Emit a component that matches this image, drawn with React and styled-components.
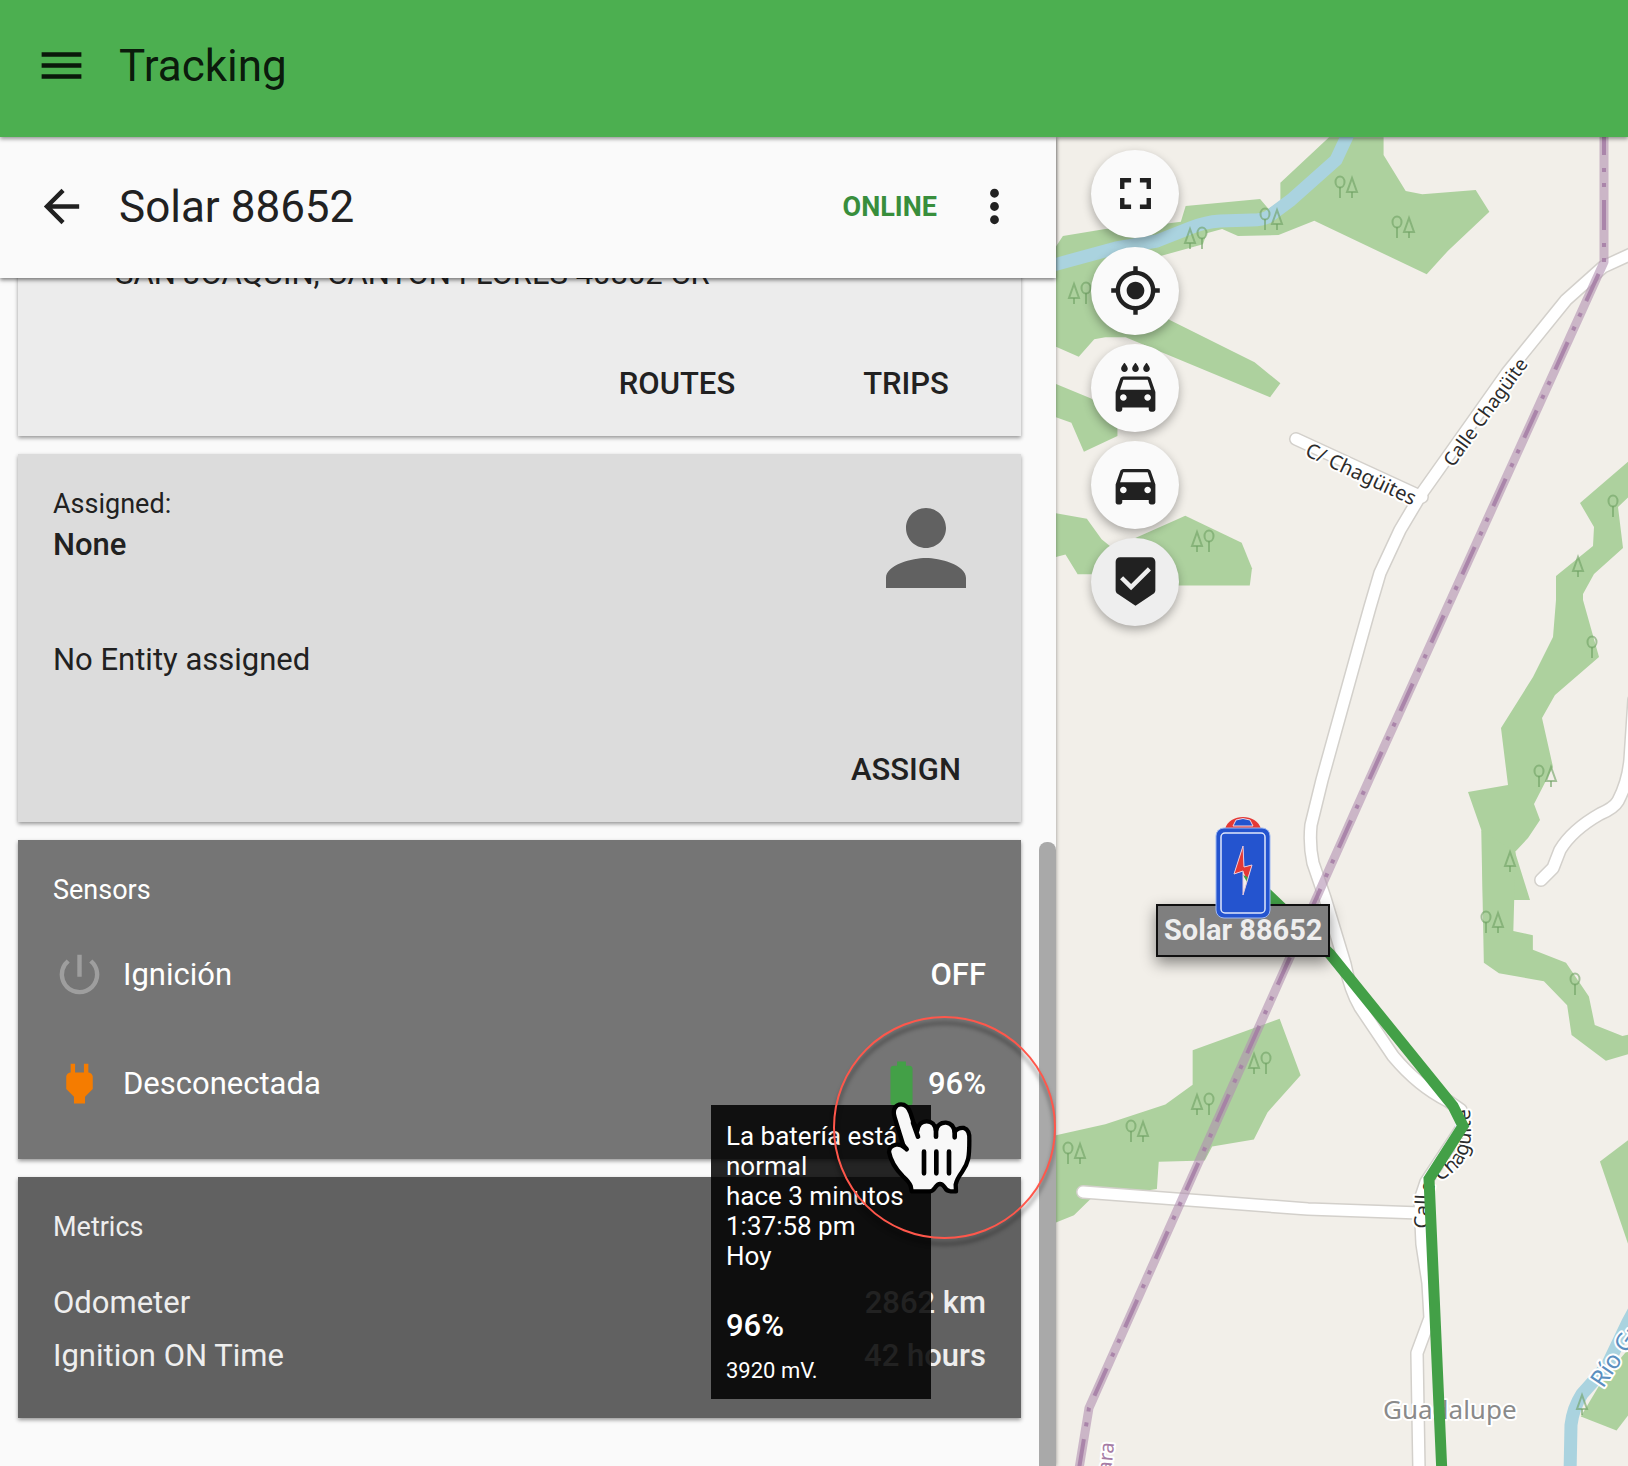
import React from "react";
import styled, { createGlobalStyle, css } from "styled-components";
import {
  MdMenu,
  MdArrowBack,
  MdMoreVert,
  MdPerson,
  MdPowerSettingsNew,
  MdPower,
  MdBatteryFull,
  MdFullscreen,
  MdMyLocation,
  MdLocalCarWash,
  MdDirectionsCar,
  MdBeenhere,
} from "react-icons/md";

const GlobalStyle = createGlobalStyle`
  *, *::before, *::after { box-sizing: border-box; }
  body {
    margin: 0;
    font-family: Roboto, "Liberation Sans", sans-serif;
    color: #212121;
    background: #fafafa;
  }
  h1, h2, h3, p, dl, dt, dd, ul { margin: 0; padding: 0; font-weight: 400; }
`;

const bareButton = css`
  border: 0;
  margin: 0;
  padding: 0;
  font-family: inherit;
  color: inherit;
  background: transparent;
  cursor: pointer;
`;

const Page = styled.div`
  display: grid;
  grid-template-rows: auto minmax(0, 1fr);
  height: 100vh;
`;

const AppBar = styled.header`
  position: relative;
  z-index: 3;
  display: flex;
  align-items: center;
  gap: 31px;
  height: 137px;
  padding: 0 35px 6px;
  color: rgba(0, 0, 0, 0.87);
  background: #4caf50;
  box-shadow: 0 2px 4px rgba(0, 0, 0, 0.4);
`;

const IconButton = styled.button`
  ${bareButton}
  display: flex;
  font-size: 53px;
`;

const Title = styled.h1`
  font-size: 44px;
  line-height: 52px;
`;

const Main = styled.main`
  display: grid;
  grid-template-columns: minmax(0, 24fr) minmax(0, 13fr);
  min-height: 0;
`;

const Panel = styled.section`
  position: relative;
  z-index: 1;
  display: flex;
  flex-direction: column;
  min-height: 0;
  background: #fafafa;
  box-shadow: 0 0 4px rgba(0, 0, 0, 0.4);
`;

const PanelBar = styled.div`
  position: relative;
  z-index: 1;
  flex: none;
  display: flex;
  align-items: center;
  gap: 31px;
  height: 141px;
  padding: 0 35px 2px;
  background: #fafafa;
  box-shadow: 0 2px 4px rgba(0, 0, 0, 0.5);

  ${Title} {
    flex: 1;
  }
`;

const Status = styled.span`
  font-size: 27px;
  font-weight: 700;
  color: #388e3c;
`;

const ScrollArea = styled.div`
  position: relative;
  flex: 1;
  min-height: 0;
  overflow: hidden;
  display: flex;
  flex-direction: column;
  justify-content: flex-end;
  gap: 18px;
  padding: 0 35px 48px 18px;
`;

const ScrollThumb = styled.div`
  position: absolute;
  right: 0;
  bottom: 0;
  width: 17px;
  height: 624px;
  border-radius: 8px 8px 0 0;
  background: #a9a9a9;
`;

const tones = {
  light: { back: "#ececec", text: "#212121" },
  soft: { back: "#dcdcdc", text: "#212121" },
  mid: { back: "#757575", text: "#ffffff" },
  dark: { back: "#616161", text: "#eeeeee" },
};

const Card = styled.article`
  flex: none;
  color: ${(p) => tones[p.$tone].text};
  background: ${(p) => tones[p.$tone].back};
  box-shadow: 0 2px 4px rgba(0, 0, 0, 0.4);
`;

const CardBody = styled.div`
  padding: 34px 35px ${(p) => p.$bottom}px;
`;

const CardHead = styled.div`
  display: flex;
  justify-content: space-between;
  margin-bottom: 28px;
`;

const Caption = styled.h2`
  font-size: 27px;
  line-height: 33px;
`;

const Text = styled.p`
  font-size: 31px;
  line-height: 48px;
  font-weight: ${(p) => (p.$strong ? 500 : 400)};
`;

const Address = styled(Text)`
  padding-left: 62px;
`;

const Avatar = styled(MdPerson)`
  font-size: 120px;
  color: #616161;
`;

const Actions = styled.div`
  display: flex;
  justify-content: flex-end;
  gap: 35px;
  padding: 11px 18px 13px;
`;

const ActionButton = styled.button`
  ${bareButton}
  min-width: 194px;
  height: 80px;
  font-size: 31px;
  font-weight: 500;
  text-transform: uppercase;
`;

const SensorList = styled.ul`
  list-style: none;
  margin-top: 13px;
`;

const SensorRow = styled.li`
  display: flex;
  align-items: center;
  gap: 17px;
  height: 109px;
  font-size: 31px;

  > svg {
    font-size: 53px;
    color: ${(p) => p.$tint};
  }
`;

const SensorName = styled.span`
  flex: 1;
`;

const SensorValue = styled.span`
  position: relative;
  display: flex;
  align-items: center;
  font-weight: 500;
`;

const BatteryIcon = styled(MdBatteryFull)`
  font-size: 53px;
  color: #43a047;
`;

const Tooltip = styled.div`
  position: absolute;
  z-index: 2;
  top: 48px;
  right: 55px;
  width: 220px;
  padding: 16px 15px 7px;
  font-size: 26px;
  font-weight: 400;
  line-height: 30px;
  color: #ffffff;
  background: rgba(0, 0, 0, 0.86);
`;

const TooltipValue = styled.p`
  margin-top: 31px;
  font-size: 31px;
  font-weight: 500;
  line-height: 48px;
`;

const TooltipNote = styled.p`
  font-size: 22px;
  line-height: 42px;
`;

const Ring = styled.div`
  position: absolute;
  z-index: 3;
  top: -41px;
  right: -70px;
  width: 223px;
  height: 223px;
  border: 2px solid #ff574b;
  border-radius: 50%;
  filter: drop-shadow(0 6px 2px rgba(0, 0, 0, 0.5));
`;

const Pointer = styled.svg`
  position: absolute;
  z-index: 4;
  top: 43px;
  right: 13px;
  width: 88px;
  height: 95px;
`;

const MetricList = styled.dl`
  margin-top: 32px;
`;

const MetricRow = styled.div`
  display: flex;
  justify-content: space-between;
  font-size: 31px;
  line-height: 53px;

  dd {
    font-weight: 500;
  }
`;

const MapArea = styled.section`
  position: relative;
  overflow: hidden;
  background: #f2efe9;
`;

const MapDrawing = styled.svg`
  display: block;
  width: 100%;
  height: 100%;

  text {
    font-family: "Noto Sans", sans-serif;
    paint-order: stroke;
    stroke: #ffffff;
    stroke-width: 4px;
    stroke-linejoin: round;
  }
`;

const MapTools = styled.div`
  position: absolute;
  top: 13px;
  left: 35px;
  display: flex;
  flex-direction: column;
  gap: 9px;
`;

const RoundButton = styled.button`
  ${bareButton}
  display: grid;
  place-items: center;
  width: 88px;
  height: 88px;
  padding-bottom: 2px;
  font-size: 53px;
  border-radius: 50%;
  color: #212121;
  background: ${(p) => (p.$active ? "#eeeeee" : "#fafafa")};
  box-shadow: 0 4px 10px rgba(0, 0, 0, 0.3);
`;

const Marker = styled.div`
  position: absolute;
  top: 678px;
  left: 100px;
  display: flex;
  flex-direction: column;
  align-items: center;
`;

const MarkerIcon = styled.svg`
  position: relative;
  width: 56px;
  height: 104px;
  margin-bottom: -15px;
`;

const MarkerLabel = styled.span`
  padding: 0 6px;
  font-size: 29px;
  font-weight: 700;
  line-height: 49px;
  white-space: nowrap;
  color: #eeeeee;
  background: #7f7f7f;
  border: 2px solid #101010;
  box-shadow: 0 6px 14px rgba(0, 0, 0, 0.45);
`;

const mapTools = [
  { name: "Full screen", Icon: MdFullscreen },
  { name: "Locate", Icon: MdMyLocation },
  { name: "Car wash", Icon: MdLocalCarWash },
  { name: "Vehicles", Icon: MdDirectionsCar },
  { name: "Geofences", Icon: MdBeenhere, active: true },
];

const metrics = [
  { name: "Odometer", value: "2862 km" },
  { name: "Ignition ON Time", value: "42 hours" },
];

/* Tree marks: "b" is a broadleaf, "c" a conifer, in the order drawn. */
const trees = [
  ["bc", 1346, 187],
  ["bc", 1403, 227],
  ["bc", 1271, 219],
  ["cb", 1196, 238],
  ["cb", 1080, 293],
  ["cb", 1203, 541],
  ["b", 1613, 506],
  ["c", 1578, 566],
  ["b", 1592, 647],
  ["bc", 1545, 776],
  ["c", 1510, 861],
  ["bc", 1492, 922],
  ["b", 1575, 984],
  ["cb", 1260, 1063],
  ["cb", 1203, 1104],
  ["bc", 1137, 1131],
  ["bc", 1074, 1153],
  ["c", 1582, 1404],
];

const mainRoad =
  "M1640 250 L1603 267 L1566 300 L1507 373 L1422 493 L1400 530 L1380 573 L1370 607 L1358 650 L1322 780 L1311 825 Q1309 845 1313 863 L1325 898 L1345 964 Q1350 990 1360 1007 L1393 1056 Q1418 1086 1448 1101 L1461 1110 L1463 1126 L1426 1182 L1420 1200 L1422 1244 L1428 1283 L1430 1318 L1417 1353 L1419 1470";
const sideRoads = [
  "M1296 439 L1422 497",
  "M1083 1192 L1308 1209 L1420 1213",
  "M1634 700 L1630 760 Q1628 782 1618 801 Q1614 808 1600 814 Q1572 830 1560 850 L1553 868 L1541 880",
];
const boundary = "M1604 130 L1604 262 L1369 780 L1089 1408 L1078 1475";

function Tree({ kind, x, y }) {
  return (
    <g
      transform={`translate(${x} ${y})`}
      fill="none"
      stroke="#6ea062"
      strokeOpacity="0.6"
      strokeWidth="2"
    >
      {kind.split("").map((k, i) => {
        const cx = kind.length === 1 ? 0 : i === 0 ? -6 : 6;
        return k === "b" ? (
          <g key={i}>
            <ellipse cx={cx} cy="-5" rx="4.5" ry="5.5" />
            <path d={`M${cx} 0V11`} />
          </g>
        ) : (
          <g key={i}>
            <path d={`M${cx} -9L${cx - 5} 5H${cx + 5}Z`} />
            <path d={`M${cx} 5V11`} />
          </g>
        );
      })}
    </g>
  );
}

function TrackMap() {
  return (
    <MapDrawing viewBox="1056 137 572 1329" preserveAspectRatio="xMinYMin slice" role="img" aria-label="Map">
      <rect x="1000" y="100" width="4000" height="4000" fill="#f2efe9" />
      <g fill="#add19e">
        <g transform="translate(1050 130) scale(0.3686 0.3333)">
          <path d="M757 22H905V75L965 183L1010 193L1155 180L1192 245L1080 362L1022 433L717 272L620 315L510 318L467 297L425 310L415 343L300 378L130 440L16 440V350L35 318L150 297L250 290L355 275L368 228L570 207L593 237L625 212V158Z" />
          <path d="M16 400H130L325 570L555 697L625 760L597 802L205 622L150 622L120 628L78 680L16 650Z" />
          <path d="M16 762L110 805L183 850V918L92 965L58 878L16 862Z" />
          <path d="M16 1150L100 1166L140 1228L165 1250V1333H75L42 1274L16 1281Z" />
          <path d="M230 1225L367 1157L520 1238L548 1315L542 1367H230Z" />
        </g>
        <path d="M1636 455L1580 503L1594 527L1593 546L1556 576L1556 600L1553 637L1533 677L1501 728L1508 785L1468 792L1482 832L1483 900L1530 900L1515 852L1528 838L1540 820L1534 804L1553 767L1542 718L1555 695L1599 657L1583 600L1583 594L1594 574L1623 548L1618 507L1636 490Z" />
        <g transform="translate(1050 780) scale(0.3686 0.4374)">
          <path d="M1170 115L1177 418L1218 442L1340 460L1403 515L1415 583L1508 642L1580 624V580L1553 585L1478 560L1462 495L1400 418L1310 388V355L1257 345L1263 165Z" />
          <path d="M16 812L150 787L313 742L387 697V618L623 546L680 675L590 760L553 822L440 838L420 870L295 873L290 935L110 958L65 995L16 1012Z" />
          <path d="M1580 816L1492 872L1580 1090Z" />
          <path d="M1580 1290L1500 1370L1440 1455L1537 1487L1580 1440Z" />
        </g>
      </g>
      <g fill="none" stroke="#aad3df" strokeWidth="13" strokeLinejoin="round">
        <path d="M1350 130 L1336 160 L1291 200 L1268 217 Q1262 220 1252 220 L1220 221 Q1205 222 1190 228 L1157 241 L1116 248 L1050 266" />
        <path d="M1640 1300 L1628 1322 L1607 1366 L1582 1394 Q1573 1408 1571 1425 L1570 1475" />
      </g>
      {trees.map(([kind, x, y]) => (
        <Tree key={`${x}-${y}`} kind={kind} x={x} y={y} />
      ))}
      <g fill="none" strokeLinecap="round" strokeLinejoin="round">
        <g stroke="#d3d0cb" strokeWidth="14">
          <path d={mainRoad} />
          {sideRoads.map((d) => (
            <path key={d} d={d} />
          ))}
        </g>
        <g stroke="#ffffff" strokeWidth="11">
          <path d={mainRoad} />
          {sideRoads.map((d) => (
            <path key={d} d={d} />
          ))}
        </g>
      </g>
      <g fill="none" strokeLinejoin="round">
        <path d={boundary} stroke="#b08fb1" strokeOpacity="0.6" strokeWidth="9" />
        <path d={boundary} stroke="#a57ca5" strokeOpacity="0.85" strokeWidth="4" strokeDasharray="30 13 4 11 4 13" strokeDashoffset="5" />
      </g>
      <g fill="#2c2c2c" fontSize="20">
        <text transform="translate(1453 468) rotate(-54)" fontSize="19">
          Calle Chagüite
        </text>
        <text transform="translate(1304 455) rotate(25)">C/ Chagüites</text>
        <path id="street" d="M1428 1229 L1430 1196 Q1434 1184 1448 1176 Q1472 1160 1471 1130 L1469 1090" fill="none" />
        <text>
          <textPath href="#street">Calle Chagüite</textPath>
        </text>
      </g>
      <text x="1383" y="1419" fontSize="26" fill="#8a8a8a">
        Guadalupe
      </text>
      <text transform="translate(1603 1389) rotate(-56)" fontSize="24" fill="#5b8fbf">
        Río Gu
      </text>
      <text transform="translate(1111 1473) rotate(-84)" fontSize="20" fill="#a57ca5">
        ara
      </text>
      <path
        d="M1240 868 L1330 954 L1453 1106 L1463 1126 L1429 1179 L1442 1475"
        fill="none"
        stroke="#43a047"
        strokeWidth="11"
      />
    </MapDrawing>
  );
}

function BatteryMarker() {
  return (
    <MarkerIcon viewBox="0 0 56 104" aria-hidden="true">
      <path d="M10 14C14 -2 42 -2 46 14Z" fill="#e53935" />
      <path d="M18 11L21 5Q28 2 35 5L38 11Z" fill="#2454cf" stroke="#f2d5e0" strokeWidth="1" />
      <rect x="1" y="13" width="54" height="90" rx="8" fill="#2454cf" stroke="#9db7f2" strokeWidth="1" />
      <rect x="6" y="18" width="44" height="80" rx="4" fill="none" stroke="#dfe6fb" strokeWidth="1.5" />
      <path d="M28 31L19 59L28 56V80L37 50L29 52Z" fill="#f5f1ea" />
      <path d="M28 31L19 59L28 56L32 65L37 50L29 52Z" fill="#e53935" />
      <path d="M28 60L33 62L32 67Z" fill="#43a047" />
      <path d="M28 31L19 59L28 56V80L37 50L29 52Z" fill="none" stroke="#e8c9dc" strokeWidth="1" />
    </MarkerIcon>
  );
}

function Hand() {
  return (
    <Pointer viewBox="615 360 264 285" aria-hidden="true">
      <path
        d="M663 373C678 373 686 384 691 398L700 426Q708 440 712 452Q716 424 740 424Q764 424 768 452Q774 427 798 428Q820 430 824 456Q834 442 852 444Q870 450 868 480C868 530 866 548 846 576Q830 598 827 614L828 634H812Q800 634 794 622Q780 602 766 622Q758 634 748 634H695L692 618Q688 606 668 588C642 562 632 542 627 516Q628 498 648 494Q662 492 672 502L644 412C636 388 648 373 663 373Z"
        fill="#f8f8f8"
        stroke="#000000"
        strokeWidth="13"
        strokeLinejoin="round"
      />
      <path
        d="M699 428L714 470M768 440V470M824 448V472M668 494L680 508M732 515V580M769 515V580M807 515V580"
        fill="none"
        stroke="#000000"
        strokeWidth="14"
        strokeLinecap="round"
      />
    </Pointer>
  );
}

export default function App() {
  return (
    <Page>
      <GlobalStyle />
      <AppBar>
        <IconButton aria-label="Open menu">
          <MdMenu />
        </IconButton>
        <Title>Tracking</Title>
      </AppBar>
      <Main>
        <Panel>
          <PanelBar>
            <IconButton aria-label="Back">
              <MdArrowBack />
            </IconButton>
            <Title as="h2">Solar 88652</Title>
            <Status>ONLINE</Status>
            <IconButton aria-label="More options">
              <MdMoreVert />
            </IconButton>
          </PanelBar>
          <ScrollArea>
            <Card $tone="light">
              <CardBody $bottom={34}>
                <Address>SAN JOAQUIN, CANTON FLORES 40802 CR</Address>
              </CardBody>
              <Actions>
                <ActionButton>Routes</ActionButton>
                <ActionButton>Trips</ActionButton>
              </Actions>
            </Card>
            <Card $tone="soft">
              <CardBody $bottom={34}>
                <CardHead>
                  <div>
                    <Caption>Assigned:</Caption>
                    <Text $strong>None</Text>
                  </div>
                  <Avatar />
                </CardHead>
                <Text>No Entity assigned</Text>
              </CardBody>
              <Actions>
                <ActionButton>Assign</ActionButton>
              </Actions>
            </Card>
            <Card $tone="mid">
              <CardBody $bottom={21}>
                <Caption>Sensors</Caption>
                <SensorList>
                  <SensorRow $tint="#9e9e9e">
                    <MdPowerSettingsNew />
                    <SensorName>Ignición</SensorName>
                    <SensorValue>OFF</SensorValue>
                  </SensorRow>
                  <SensorRow $tint="#f57c00">
                    <MdPower />
                    <SensorName>Desconectada</SensorName>
                    <SensorValue>
                      <BatteryIcon />
                      96%
                      <Tooltip role="tooltip">
                        <p>La batería está normal</p>
                        <p>hace 3 minutos</p>
                        <p>1:37:58 pm</p>
                        <p>Hoy</p>
                        <TooltipValue>96%</TooltipValue>
                        <TooltipNote>3920 mV.</TooltipNote>
                      </Tooltip>
                      <Ring />
                      <Hand />
                    </SensorValue>
                  </SensorRow>
                </SensorList>
              </CardBody>
            </Card>
            <Card $tone="dark">
              <CardBody $bottom={36}>
                <Caption>Metrics</Caption>
                <MetricList>
                  {metrics.map((m) => (
                    <MetricRow key={m.name}>
                      <dt>{m.name}</dt>
                      <dd>{m.value}</dd>
                    </MetricRow>
                  ))}
                </MetricList>
              </CardBody>
            </Card>
            <ScrollThumb />
          </ScrollArea>
        </Panel>
        <MapArea>
          <TrackMap />
          <Marker>
            <BatteryMarker />
            <MarkerLabel>Solar 88652</MarkerLabel>
          </Marker>
          <MapTools>
            {mapTools.map(({ name, Icon, active }) => (
              <RoundButton key={name} aria-label={name} $active={active}>
                <Icon />
              </RoundButton>
            ))}
          </MapTools>
        </MapArea>
      </Main>
    </Page>
  );
}
